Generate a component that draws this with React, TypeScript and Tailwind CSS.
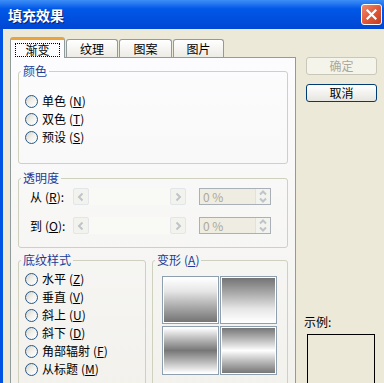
import React from "react";

const font = "font-['Noto_Sans_CJK_SC','Noto_Sans',sans-serif]";

function Key({ k }: { k: string }) {
  return (
    <span className="ml-[3px]">
      (<span className="underline underline-offset-1">{k}</span>)
    </span>
  );
}

function Radio({ label, k }: { label: string; k: string }) {
  return (
    <div className="flex items-center h-[18px] gap-[4px]">
      <span className="w-[13px] h-[13px] rounded-full border border-[#2a5782] bg-gradient-to-br from-[#d4d2c8] via-[#f2f1ec] to-white shrink-0" />
      <span className="text-[12px] leading-[14px] text-black">
        {label}
        <Key k={k} />
      </span>
    </div>
  );
}

function Arrow({ dir }: { dir: "left" | "right" | "up" | "down" }) {
  const d = {
    left: "M6.5 1.5 L3 5 L6.5 8.5",
    right: "M3.5 1.5 L7 5 L3.5 8.5",
    up: "M2 6.5 L5 3.5 L8 6.5",
    down: "M2 3.5 L5 6.5 L8 3.5",
  }[dir];
  return (
    <svg width="10" height="10" viewBox="0 0 10 10">
      <path d={d} fill="none" stroke="#bfc3ca" strokeWidth="2" />
    </svg>
  );
}

function ScrollBar() {
  return (
    <div className="w-[113px] h-[17px] flex bg-[#f9f9f6]">
      <div className="w-[16px] h-[17px] rounded-[2px] border border-[#e2e5ea] bg-[#f3f3ee] flex items-center justify-center">
        <Arrow dir="left" />
      </div>
      <div className="flex-1" />
      <div className="w-[16px] h-[17px] rounded-[2px] border border-[#e2e5ea] bg-[#f3f3ee] flex items-center justify-center">
        <Arrow dir="right" />
      </div>
    </div>
  );
}

function Spin() {
  return (
    <div className="w-[72px] h-[17px] border border-[#a9b0b8] bg-[#efede2] flex items-center">
      <span className="flex-1 pl-[3px] text-[12px] leading-[14px] text-[#aca899]">0 %</span>
      <div className="w-[15px] h-[15px] flex flex-col bg-[#f3f3ee] border-l border-[#e2e2dc]">
        <div className="flex-1 flex items-center justify-center overflow-hidden">
          <Arrow dir="up" />
        </div>
        <div className="flex-1 flex items-center justify-center overflow-hidden">
          <Arrow dir="down" />
        </div>
      </div>
    </div>
  );
}

function Legend({ children }: { children: React.ReactNode }) {
  return (
    <legend className="ml-[2px] px-[2px] text-[12px] leading-[14px] text-[#1b3c98]">
      {children}
    </legend>
  );
}

function Tab({ label, active, w }: { label: string; active?: boolean; w: string }) {
  if (active) {
    return (
      <div className={`${w} h-[21px] relative -mb-px z-10 bg-[#fcfcfe] border-x border-[#919b9c] rounded-t-[3px] border-t-[3px] border-t-[#e9a23c] flex items-center justify-center px-[4px]`}>
        <span className="flex-1 h-[14px] mt-[1px] border border-dotted border-black flex items-center justify-center text-[12px] leading-[12px] text-black">
          {label}
        </span>
      </div>
    );
  }
  return (
    <div className={`${w} h-[18px] bg-gradient-to-b from-white to-[#ecebe5] border border-b-0 border-[#919b9c] rounded-t-[3px] flex items-center justify-center text-[12px] leading-[14px] text-black`}>
      {label}
    </div>
  );
}

export default function App() {
  return (
    <div className={`w-[384px] h-[383px] overflow-hidden flex flex-col bg-[#0054e3] ${font}`}>
      {/* Title bar */}
      <div className="h-[29px] shrink-0 flex items-center justify-between pl-[8px] pr-[2px] bg-gradient-to-b from-[#3d8ef6] via-[#0058e8] via-30% to-[#0046d4]">
        <span className="text-white text-[14px] font-bold leading-[16px] [text-shadow:1px_1px_0_#0a1f6a]">填充效果</span>
        <div className="w-[21px] h-[21px] rounded-[3px] border border-white bg-gradient-to-br from-[#ee8a6a] via-[#e0593b] to-[#c23b1e] flex items-center justify-center">
          <svg width="11" height="11" viewBox="0 0 11 11">
            <path d="M1.5 1.5 L9.5 9.5 M9.5 1.5 L1.5 9.5" stroke="white" strokeWidth="2.2" strokeLinecap="square" />
          </svg>
        </div>
      </div>

      {/* Body */}
      <div className="flex-1 ml-[3px] bg-[#ece9d8] flex pl-[7px] pt-[7px]">
        {/* Left: tabs + panel */}
        <div className="w-[286px] flex flex-col">
          <div className="h-[21px] flex items-end gap-[1px] shrink-0">
            <Tab label="渐变" active w="w-[55px]" />
            <Tab label="纹理" w="w-[52px]" />
            <Tab label="图案" w="w-[53px]" />
            <Tab label="图片" w="w-[51px]" />
          </div>
          <div className="flex-1 border border-[#919b9c] bg-gradient-to-b from-[#fcfcfe] to-[#f2f1ec] px-[7px] flex flex-col">
            <fieldset className="mt-[6px] h-[100px] border border-[#d0d0bf] rounded-[3px]">
              <Legend>颜色</Legend>
              <div className="mt-[14px] pl-[6px] flex flex-col">
                <Radio label="单色" k="N" />
                <Radio label="双色" k="T" />
                <Radio label="预设" k="S" />
              </div>
            </fieldset>

            <fieldset className="mt-[7px] h-[77px] border border-[#d0d0bf] rounded-[3px]">
              <Legend>透明度</Legend>
              <div className="mt-[3px] pl-[11px] flex flex-col gap-[12px]">
                <div className="flex items-center h-[17px]">
                  <span className="w-[43px] text-[12px] leading-[14px] text-black">
                    从<Key k="R" />:
                  </span>
                  <ScrollBar />
                  <div className="ml-[13px]">
                    <Spin />
                  </div>
                </div>
                <div className="flex items-center h-[17px]">
                  <span className="w-[43px] text-[12px] leading-[14px] text-black">
                    到<Key k="O" />:
                  </span>
                  <ScrollBar />
                  <div className="ml-[13px]">
                    <Spin />
                  </div>
                </div>
              </div>
            </fieldset>

            <div className="mt-[5px] flex gap-[6px]">
              <fieldset className="w-[128px] h-[140px] border border-[#d0d0bf] rounded-[3px]">
                <Legend>底纹样式</Legend>
                <div className="mt-[3px] pl-[6px] flex flex-col">
                  <Radio label="水平" k="Z" />
                  <Radio label="垂直" k="V" />
                  <Radio label="斜上" k="U" />
                  <Radio label="斜下" k="D" />
                  <Radio label="角部辐射" k="F" />
                  <Radio label="从标题" k="M" />
                </div>
              </fieldset>
              <fieldset className="flex-1 h-[140px] border border-[#d0d0bf] rounded-[3px]">
                <Legend>
                  变形<Key k="A" />
                </Legend>
                <div className="mt-[9px] pl-[9px] grid grid-cols-[57px_57px] gap-x-[1px] gap-y-[2px]">
                  <div className="h-[48px] border border-[#8e9fb0] p-px bg-white">
                    <div className="w-full h-full bg-gradient-to-b from-white via-[#e6e6e6] via-30% to-[#747474]" />
                  </div>
                  <div className="h-[48px] border border-[#8e9fb0] p-px bg-white">
                    <div className="w-full h-full bg-gradient-to-b from-[#747474] via-[#e6e6e6] via-70% to-white" />
                  </div>
                  <div className="h-[49px] border border-[#8e9fb0] p-px bg-white">
                    <div className="w-full h-full bg-gradient-to-b from-white via-[#777777] to-white" />
                  </div>
                  <div className="h-[49px] border border-[#8e9fb0] p-px bg-white">
                    <div className="w-full h-full bg-gradient-to-b from-[#777777] via-white to-[#777777]" />
                  </div>
                </div>
              </fieldset>
            </div>
          </div>
        </div>

        {/* Right column */}
        <div className="ml-[10px] w-[71px] pt-[21px] flex flex-col">
          <div className="h-[18px] rounded-[3px] border border-[#c9c7ba] bg-[#f5f4ea] flex items-center justify-center text-[12px] leading-[14px] text-[#aca899]">
            确定
          </div>
          <div className="mt-[9px] h-[18px] rounded-[3px] border border-[#003c74] bg-gradient-to-b from-white to-[#e6e5df] flex items-center justify-center text-[12px] leading-[14px] text-black">
            取消
          </div>
          <span className="mt-[213px] -ml-[2px] text-[12px] leading-[14px] text-black">示例:</span>
          <div className="mt-[5px] ml-[1px] w-[68px] h-[60px] border border-black bg-[#ece9d8]" />
        </div>
      </div>
    </div>
  );
}
